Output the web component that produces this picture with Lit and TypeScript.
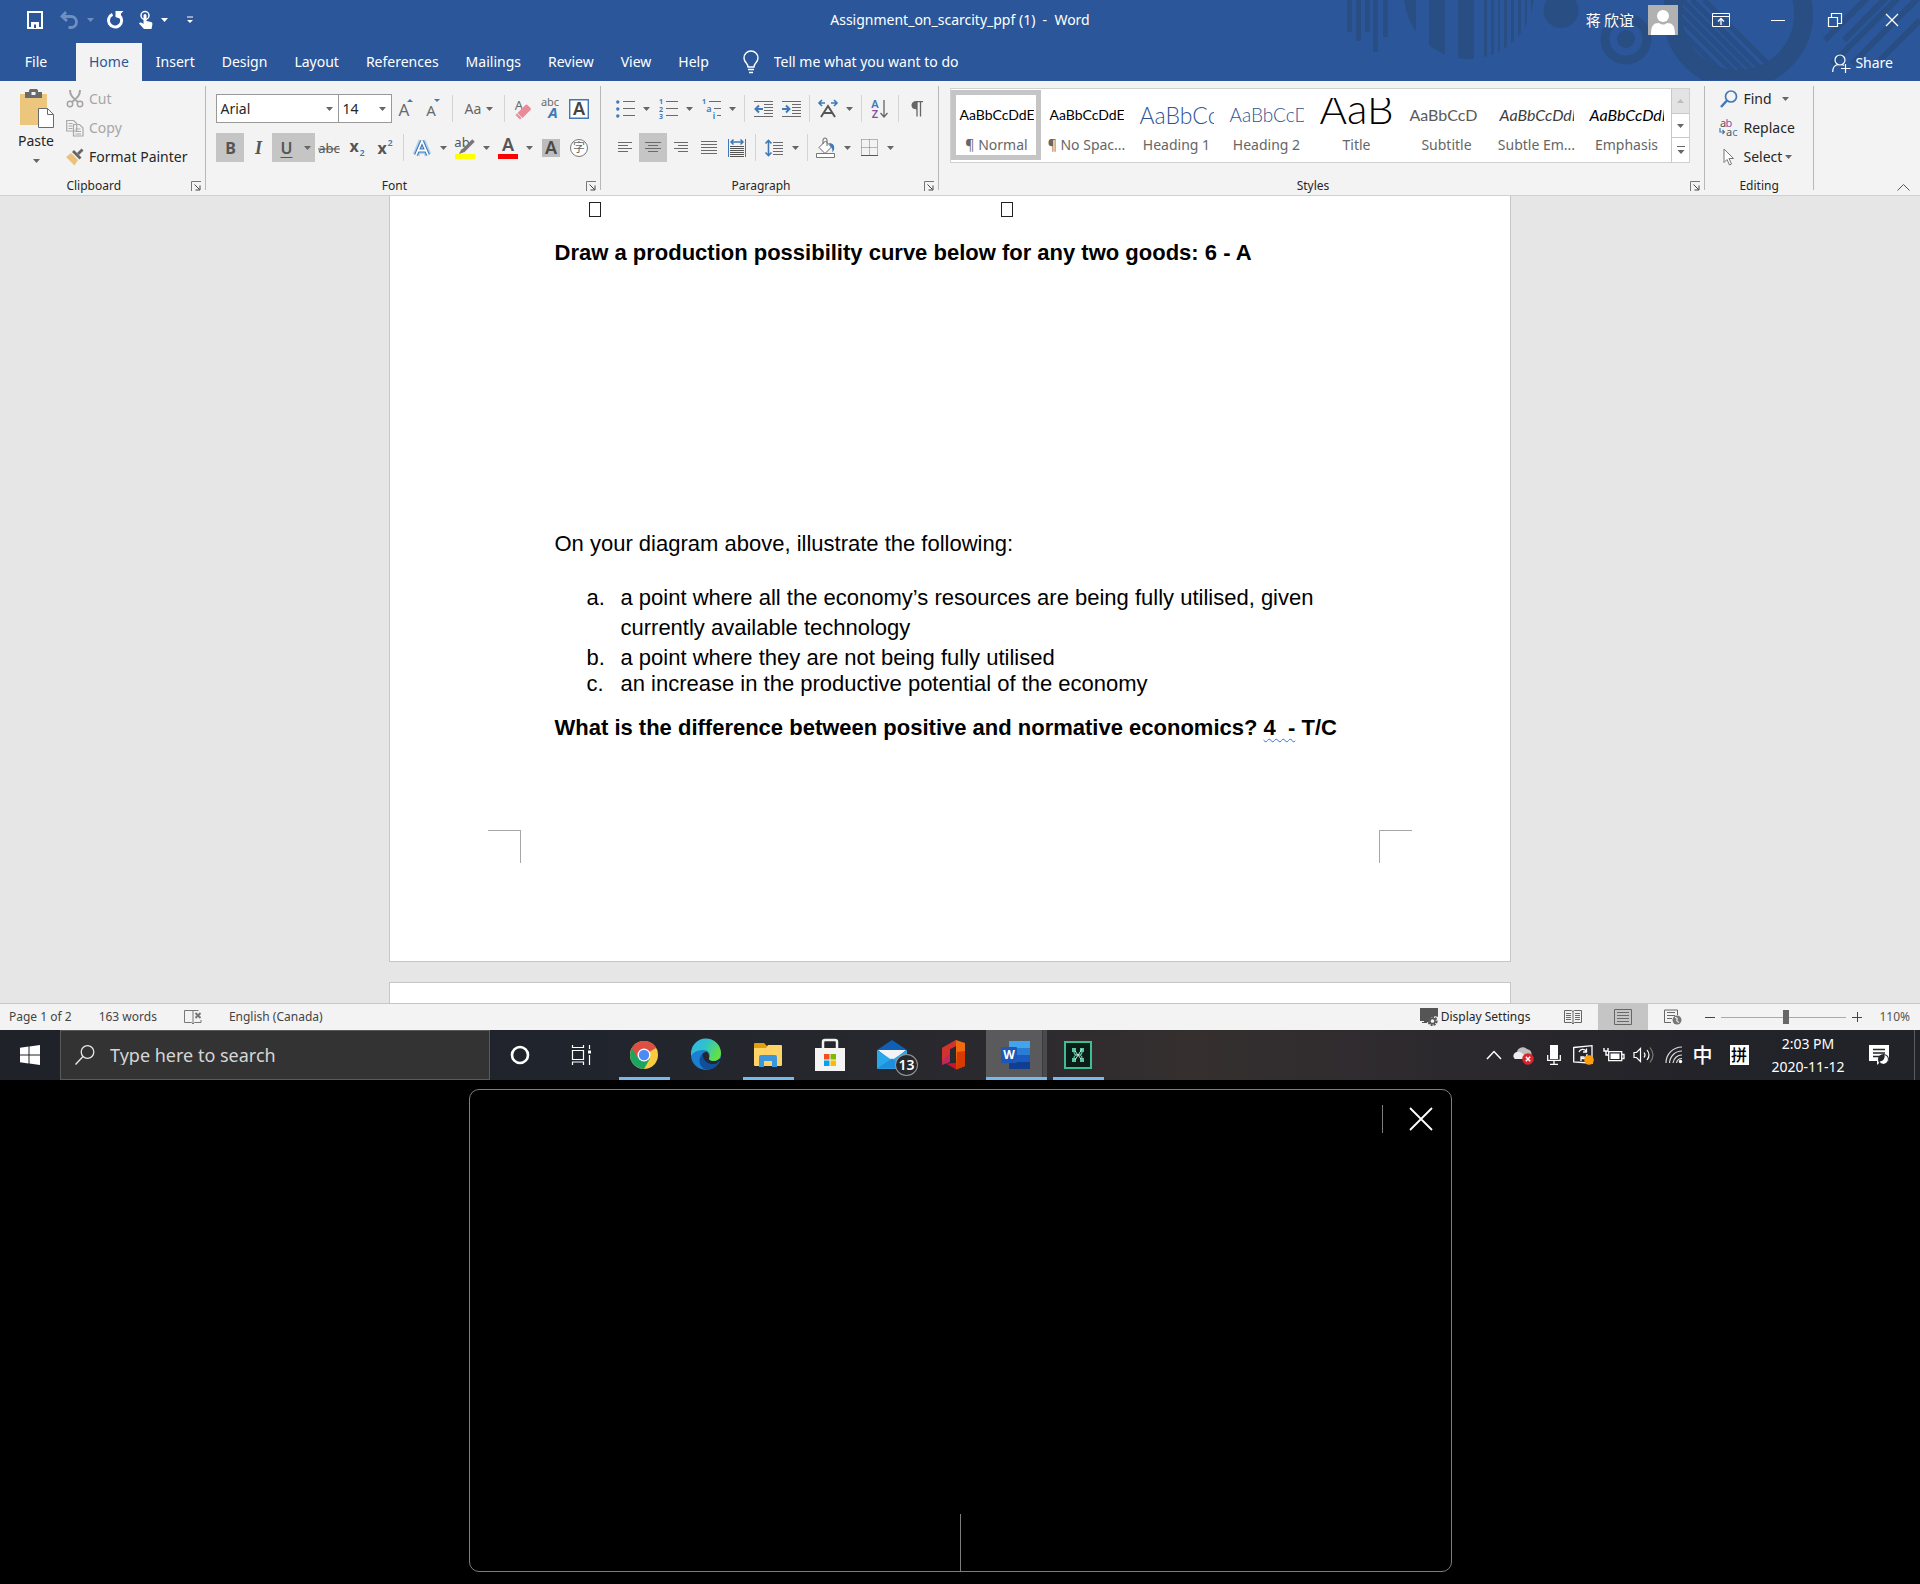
import { LitElement, html, svg, css, TemplateResult } from "lit";
import { customElement, state } from "lit/decorators.js";
import { classMap } from "lit/directives/class-map.js";

const ic = (w: number, h: number, body: unknown) =>
  html`<svg class="ic" width=${w} height=${h} viewBox="0 0 ${w} ${h}" fill="none" aria-hidden="true">${body}</svg>`;

const G = "#6a6a6a";
const B = "#3f79b8";

const caret = (fill = "#666") => ic(7, 4, svg`<path d="M0 0h7L3.5 4z" fill=${fill} />`);

/** Horizontal rules of the given [x1, x2, y] triples. */
const rules = (rows: number[][], stroke = G) =>
  rows.map(([a, b, y]) => svg`<path d="M${a} ${y + 0.5}H${b}" stroke=${stroke} />`);

const txt = (
  x: number, y: number, size: number, fill: string, s: string, weight = "400", style = "normal", family = "Noto Sans",
) => svg`<text x=${x} y=${y} font-size=${size} fill=${fill} font-weight=${weight} font-style=${style}
  font-family="'${family}', 'Noto Sans CJK SC', sans-serif" text-anchor="middle">${s}</text>`;

const I: Record<string, TemplateResult> = {
  save: ic(18, 18, svg`<path d="M2 1h14v16H2z" stroke="#fff" stroke-width="2"/><path d="M5 11h8v6H5z" fill="#fff"/><path d="M8 13.500h2V17H8z" fill="#2b579a"/>`),
  undo: ic(20, 18, svg`<path d="M6 1 2 5.500 7 10M2.500 5.500H11a5.500 5.500 0 0 1 0 11H8.500" stroke="#6f8fc3" stroke-width="2.800"/>`),
  redo: ic(18, 18, svg`<path d="M6.500 3.300A6.600 6.600 0 1 0 13.500 4.500" stroke="#fff" stroke-width="3"/><path d="M9.500 0h8l-2.500 2.500V8L9.500 6z" fill="#fff"/>`),
  touch: ic(16, 20, svg`<circle cx="7" cy="5.500" r="4" stroke="#fff" stroke-width="1.500"/><path d="M5.500 5.500a1.500 1.500 0 0 1 3 0V11l4.500 1c1.500.4 1.500 1.500 1.300 3L13.500 19H6L1 13.500c1-1.500 2.500-1 4.500.5z" fill="#fff"/>`),
  customize: ic(8, 8, svg`<path d="M1 1h6" stroke="#fff"/><path d="M1 4h6L4 7z" fill="#fff"/>`),
  bulb: ic(18, 24, svg`<path d="M6 17c0-4-4-4.500-4-9a7 7 0 0 1 14 0c0 4.500-4 5-4 9zM6 19.500h6M7 22.500h4" stroke="#fff" stroke-width="1.400"/>`),
  avatar: ic(30, 30, svg`<path d="M0 0h30v30H0z" fill="#b1b1b1"/><circle cx="15" cy="11" r="6" fill="#fff"/><path d="M3 30c0-9 2-12 8-12 2.500 2 5.500 2 8 0 6 0 8 3 8 12z" fill="#fff"/>`),
  ribbonOpts: ic(18, 14, svg`<path d="M.5.500h17v13H.5zM.5 3.500h17" stroke="#fff"/><path d="M9 12V6M6 8.500l3-3 3 3" stroke="#fff" stroke-width="1.300"/>`),
  minimize: ic(14, 14, svg`<path d="M0 7.500h14" stroke="#fff"/>`),
  restore: ic(14, 14, svg`<path d="M.5 4.500h9v9h-9zM3.500 4V.5h10v10H10" stroke="#fff" stroke-width="1.200"/>`),
  close: ic(14, 14, svg`<path d="m1 1 12 12M13 1 1 13" stroke="#fff" stroke-width="1.300"/>`),
  share: ic(19, 19, svg`<circle cx="8" cy="6" r="5" stroke="#fff" stroke-width="1.200"/><path d="M.7 18c0-4 2-7 5.500-7.500M10 10.500l2 1M13.500 10v9M9 14.500h9.500" stroke="#fff" stroke-width="1.200"/>`),
  paste: ic(35, 40, svg`<path d="M1 5h27v31H1z" fill="#ecc67d"/><path d="M6 3h4V1.500C10 .7 11 0 12 0h5c1 0 2 .7 2 1.500V3h4v6H6z" fill="#6a6a6a"/><path d="M12.500 3h4v3h-4z" fill="#f3f3f3"/><path d="M19.500 19.500h9l6 6v13h-15z" fill="#fff" stroke="#6a6a6a"/><path d="M28.500 19.500v6h6" stroke="#6a6a6a"/>`),
  cut: ic(18, 18, svg`<path d="M4 0c0 5 2 7 8 12M14 0c0 5-2 7-8 12" stroke="#a6a3a6" stroke-width="2"/><circle cx="4" cy="14" r="2.700" stroke="#a6a3a6" stroke-width="1.500"/><circle cx="14" cy="14" r="2.700" stroke="#a6a3a6" stroke-width="1.500"/>`),
  copy: ic(18, 18, svg`<path d="M.7 1.500h7l3 3V12h-10zM7.500 5.500h6l3.500 3.500v8H7.500z" fill="#f3f3f3" stroke="#aaa7aa" stroke-width="1.200"/><path d="M2.500 4.500h4M2.500 7h4M2.500 9.500h4M9.500 10h5M9.500 12.500h5.500M9.500 15h5.500" stroke="#aaa7aa"/>`),
  painter: ic(18, 18, svg`<path d="m0 9 5-4 7 7-3.500 5.500z" fill="#ecc27a"/><path d="m6 4 2-2 7.500 7.500-2 2z" fill="#666"/><path d="m11 5 4.500-4.500 2 2L13 7z" fill="#666"/>`),
  launcher: ic(10, 10, svg`<path d="M.5 10V.5H10" stroke="#777"/><path d="m3.500 3.500 5 5M9 4.500V9H4.500" stroke="#444"/>`),
  grow: ic(20, 22, svg`${txt(8, 18, 17, G, "A")}<path d="m11 4 3-3 3 3z" fill=${B}/>`),
  shrink: ic(20, 22, svg`${txt(7, 18, 15, G, "A")}<path d="m10 1 3 3 3-3z" fill=${B}/>`),
  clear: ic(20, 22, svg`${txt(6, 12, 13, G, "A")}<path d="m4.500 15 8-8q1-1 2 0l3 3q1 1 0 2l-8 8z" fill="#e88a98"/><path d="m2.500 17 1.500-1.500 4.500 4.500L7 21.500z" fill="#e88a98"/>`),
  phonetic: ic(20, 22, svg`${txt(9, 8, 11, G, "abc")}${txt(12, 20, 15, B, "A", "700", "italic")}`),
  charBorder: ic(20, 20, svg`<path d="M.7.700h18.600v18.600H.7z" stroke=${B} stroke-width="1.400" fill="#fff"/>${txt(10, 16, 18, "#444", "A", "600")}`),
  strike: ic(22, 18, svg`${txt(11, 14, 13, "#555", "abc")}<path d="M0 10h22" stroke="#555"/>`),
  sub: ic(18, 20, svg`${txt(6, 14, 16, "#555", "x", "700")}${txt(14, 18, 9, B, "2", "600")}`),
  sup: ic(18, 20, svg`${txt(6, 16, 16, "#555", "x", "700")}${txt(14, 8, 9, B, "2", "600")}`),
  effects: ic(20, 20, svg`<path d="M10 3 4 17M10 3l6 14M6.500 12.500h7" stroke="#b5d3f0" stroke-width="7"/><path d="M10 3 4 17M10 3l6 14M6.500 12.500h7" stroke=${B} stroke-width="4"/><path d="M10 3 4 17M10 3l6 14M6.500 12.500h7" stroke="#fff" stroke-width="1.800"/>`),
  highlight: ic(22, 22, svg`${txt(8, 10, 13, "#555", "ab")}<path d="M19.500 3.500 9 14" stroke="#777" stroke-width="3.500"/><path d="m5 17 2.500-5 3 3z" fill="#777"/><path d="M1 17h20v5H1z" fill="#ff0"/>`),
  fontColor: ic(20, 22, svg`${txt(10, 14, 18, "#555", "A", "600")}<path d="M0 17h20v5H0z" fill="#f00"/>`),
  shade: ic(18, 18, svg`<path d="M0 0h18v18H0z" fill="#bdbdbd"/>${txt(9, 15, 18, "#4a4a4a", "A", "600")}`),
  enclose: ic(20, 20, svg`<circle cx="10" cy="10" r="8.500" stroke="#777" fill="#fff"/>${txt(10, 14, 12, "#666", "字", "400", "normal", "Noto Sans CJK SC")}`),
  bullets: ic(19, 20, svg`${[3, 10, 17].map((y) => svg`<circle cx="1.800" cy=${y} r="1.700" fill=${B}/><path d="M7 ${y - 0.5}h12" stroke=${G}/>`)}`),
  numbering: ic(19, 20, svg`${txt(2, 5, 7, B, "1", "700")}${txt(2, 13, 7, B, "2", "700")}${txt(2, 20, 7, B, "3", "700")}${rules([[7, 19, 2], [7, 19, 9], [7, 19, 16]])}`),
  multi: ic(19, 20, svg`${txt(2, 5, 7, B, "1", "700")}${txt(7, 13, 9, B, "a", "600")}${txt(12, 20, 8, B, "i", "700")}${rules([[7, 19, 2], [12, 19, 9], [15, 19, 16]])}`),
  outdent: ic(19, 18, svg`${rules([[0, 19, 1], [10, 19, 4], [10, 19, 7], [10, 19, 10], [10, 19, 13], [0, 19, 16]])}<path d="M1 9h8M5 5.500 1.500 9 5 12.500" stroke=${B} stroke-width="2"/>`),
  indent: ic(19, 18, svg`${rules([[0, 19, 1], [10, 19, 4], [10, 19, 7], [10, 19, 10], [10, 19, 13], [0, 19, 16]])}<path d="M0 9h8M4 5.500 7.500 9 4 12.500" stroke=${B} stroke-width="2"/>`),
  asian: ic(20, 18, svg`<path d="M1 3h6M13 3h6M4 0 1 3l3 3M16 0l3 3-3 3" stroke=${B} stroke-width="1.600"/><path d="m3 17 7-11 7 11M5.500 13h9" stroke="#555" stroke-width="2"/>`),
  sort: ic(18, 20, svg`${txt(4, 9, 11, B, "A", "600")}${txt(4, 19, 11, "#8a4fa3", "Z", "600")}<path d="M13 1v16M9.500 14l3.500 4 3.500-4" stroke="#666" stroke-width="1.300"/>`),
  pilcrow: ic(12, 16, svg`<path d="M6 15.500V.7h6M9.500.700v14.800" stroke="#666" stroke-width="1.300"/><path d="M6 0C2 0 .5 2 .5 4.300S2 8.500 6 8.500z" fill="#666"/>`),
  left: ic(14, 12, svg`${rules([[0, 14, 0], [0, 10, 3], [0, 14, 6], [0, 10, 9]])}`),
  center: ic(16, 12, svg`${rules([[0, 16, 0], [3, 13, 3], [0, 16, 6], [3, 13, 9]])}`),
  right: ic(14, 12, svg`${rules([[0, 14, 0], [4, 14, 3], [0, 14, 6], [4, 14, 9]])}`),
  justify: ic(16, 13, svg`${rules([[0, 16, 0], [0, 16, 3], [0, 16, 6], [0, 16, 9], [0, 16, 12]])}`),
  distribute: ic(18, 18, svg`<path d="M.5 0v18M17.500 0v18" stroke=${B}/><path d="M3 3h12M5.500.500 3 3l2.500 2.500M12.500.500 15 3l-2.500 2.500" stroke=${B} stroke-width="1.500"/>${rules([[2, 16, 7], [2, 16, 9], [2, 16, 11], [2, 16, 13], [2, 16, 15], [2, 16, 17]], "#555")}`),
  spacing: ic(18, 18, svg`<path d="M3.500 1v16M.5 4.500l3-3 3 3M.5 13.500l3 3 3-3" stroke=${B} stroke-width="1.600"/>${rules([[8, 18, 3], [8, 18, 6], [8, 18, 9], [8, 18, 12], [8, 18, 15]])}`),
  bucket: ic(20, 20, svg`<path d="M3 9.500 9.500 3l6 6L9 15.500z" fill="#fff" stroke="#666"/><path d="M7 6V2a2 2 0 0 1 4 0v6" stroke="#666"/><path d="M13 5c6 0 6.500 6 3.500 9.500 0-3-.5-5-2-6z" fill=${B}/><path d="M.5 15.500h18v4H.5z" fill="#fff" stroke="#777"/>`),
  borders: ic(17, 17, svg`<path d="M.5.500h16M.5.500v15M16.500.500v15M8.500.500v15M.5 8.500h16" stroke="#777" stroke-dasharray="1 1"/><path d="M0 16.500h17" stroke="#555"/>`),
  find: ic(18, 18, svg`<circle cx="11" cy="6.500" r="5.500" stroke=${B} stroke-width="1.700"/><path d="m7 10.500-6 6.500" stroke=${B} stroke-width="2.500"/>`),
  replace: ic(20, 18, svg`${txt(4, 8, 11, "#555", "a")}${txt(10, 8, 11, "#8a4fa3", "b")}${txt(10, 17, 11, "#555", "a")}${txt(16, 17, 11, B, "c")}<path d="M1 9v4h4M3.500 11l2 2-2 2" stroke=${B} stroke-width="1.200"/>`),
  select: ic(12, 18, svg`<path d="M1 1v13.500l3-3 2.500 5.500 2-1L6 10.500h4.500z" fill="#fff" stroke="#777"/>`),
  up: ic(13, 8, svg`<path d="m.5 7.500 6-6 6 6" stroke="#555"/>`),
  more: ic(8, 8, svg`<path d="M0 .5h8" stroke="#666"/><path d="M.5 4h7L4 8z" fill="#666"/>`),
  upCaret: ic(7, 4, svg`<path d="M0 4h7L3.500 0z" fill="#bdbdbd"/>`),
  proof: ic(18, 16, svg`<path d="M9 1.500H.5v12h7L9 15zM9 1.500h5.500M9 15l1.500-1.500H17V11" stroke="#777"/><path d="m11.500 4 5 5M16.500 4l-5 5" stroke="#777" stroke-width="2"/>`),
  display: ic(20, 20, svg`<path d="M1 1h18v9a6 6 0 0 0-9 5H8v1H3v-1h2v-1H1z" fill="#555"/><circle cx="13.500" cy="14" r="4" stroke="#555" stroke-width="2.200" stroke-dasharray="2 1"/><circle cx="13.500" cy="14" r="2.600" stroke="#555" stroke-width="1.500"/>`),
  read: ic(18, 16, svg`<path d="M9 2.500 7.500 1.500H.5v12h7L9 15l1.500-1.500h7v-12h-7zV15" stroke="#666"/>${rules([[2, 7, 4], [2, 7, 6], [2, 7, 8], [2, 7, 10], [11, 16, 4], [11, 16, 6], [11, 16, 8], [11, 16, 10]])}`),
  print: ic(18, 16, svg`<path d="M.5.500h17v15H.5z" stroke="#666"/>${rules([[3, 15, 3], [3, 15, 6], [3, 15, 9], [3, 15, 12]])}`),
  web: ic(18, 16, svg`<path d="M7 13.500H.5V1h13v5" stroke="#666"/>${rules([[3, 11, 3], [3, 11, 6], [3, 8, 9]])}<circle cx="13" cy="11" r="4.500" fill="#777"/><path d="M11 8.500q3 .5 2 2t2 3" stroke="#f3f3f3" stroke-width="1.200"/>`),
  minus: ic(10, 10, svg`<path d="M0 5.500h10" stroke="#444"/>`),
  plus: ic(10, 10, svg`<path d="M0 5.500h10M5.500 0v10" stroke="#444"/>`),
  windows: ic(20, 20, svg`<path d="M0 2.800 8.500 1.600v7.900H0zM9.500 1.400 20 0v9.500H9.500zM0 10.500h8.500v7.900L0 17.200zM9.500 10.500H20V20L9.500 18.600z" fill="#fff"/>`),
  search: ic(20, 20, svg`<circle cx="12.500" cy="7" r="6.300" stroke="#e8e8e8" stroke-width="1.300"/><path d="M8 11.500.5 19.500" stroke="#e8e8e8" stroke-width="1.300"/>`),
  cortana: ic(20, 20, svg`<circle cx="10" cy="10" r="8" stroke="#fff" stroke-width="2.600"/>`),
  taskview: ic(22, 20, svg`<path d="M1.500 5.500h11v9h-11zM1.500 0v2.500h11V0M1.500 20v-3h11v3M18.500 0v4M18.500 10v10" stroke="#fff" stroke-width="1.200"/><path d="M17 5.500h3v3h-3z" fill="#fff"/>`),
  chrome: ic(30, 30, svg`<circle cx="15" cy="15" r="14" fill="#fcca3f"/><path d="M15 15 2.900 8A14 14 0 0 1 27.100 8z" fill="#dd4f43"/><path d="M2.900 8A14 14 0 0 0 15 29l6-10.500L15 15z" fill="#1da462"/><path d="M15 8h12.100a14 14 0 0 0-24.200 0L9 18.500z" fill="#dd4f43"/><circle cx="15" cy="15" r="6.500" fill="#fff"/><circle cx="15" cy="15" r="5.200" fill="#4c8bf5"/>`),
  edge: ic(30, 30, svg`<defs><linearGradient id="eg" x1="0" y1="0" x2="1" y2=".5"><stop offset="0" stop-color="#36b1f0"/><stop offset=".5" stop-color="#2fc3c9"/><stop offset="1" stop-color="#63e046"/></linearGradient></defs><circle cx="15" cy="15" r="15" fill="#1a7fd0"/><path d="M0 14A15 15 0 0 1 30 13c0 5-3 8-7.500 8-3 0-5-1-4.500-3 1.500-2 1-8-5-8-6 0-11 2-13 6z" fill="url(#eg)"/><path d="M12 13c-4 6-1 14 6 14 4 0 7-1.500 9-4.500l2.500-2 .5-2.500-5 3-4.500 0c-2-.5-3-1.500-2.500-3 .5-1.500 0-5-2.500-6.500z" fill="#26262c"/><path d="M11.500 14C5 20 10 30 17 29.800c5-.5 8.500-3 10.500-7C21 26 12 23 11.500 14z" fill="#104f9c"/>`),
  folder: ic(30, 28, svg`<path d="M1 3q0-1 1-1h9l3 3h12v5H1z" fill="#e0a012"/><path d="M1 7h12l2-3h13q1 0 1 1v19q0 1-1 1H2q-1 0-1-1z" fill="#ffd366"/><path d="M6 26V16q0-2 2-2h14q2 0 2 2v10h-5v-6h-8v6z" fill="#3a96dd"/>`),
  store: ic(30, 32, svg`<path d="M8 9V3q0-2 2-2h10q2 0 2 2v6" stroke="#f2f2f2" stroke-width="2.500"/><path d="M0 9h30v23H0z" fill="#f4f4f4"/><path d="M9 15h5.500v5.500H9z" fill="#f25022"/><path d="M15.500 15H21v5.500h-5.500z" fill="#7fba00"/><path d="M9 21.500h5.500V27H9z" fill="#00a4ef"/><path d="M15.500 21.500H21V27h-5.500z" fill="#ffb900"/>`),
  mail: ic(30, 30, svg`<path d="M0 10 15 0l15 10v3H0z" fill="#0f5fb5"/><path d="M1 10h28l-14 12z" fill="#f4f4f4"/><path d="M0 10v18q0 1 1 1h28q1 0 1-1V10L15 20z" fill="#28a8ea"/><path d="m0 28.500 15-10 15 10z" fill="#1f8fdd"/>`),
  office: ic(24, 30, svg`<path d="M0 8 14 0v6l-6 3v13l-8 3z" fill="#c0275f"/><path d="M0 8 14 0v6l-6 3v4l-8 8z" fill="#d0342c"/><path d="m14 0 9 3v23l-9 3.500z" fill="#f06a12"/><path d="m15 12 8-1v15l-9 3.500z" fill="#d83b01"/><path d="m4 23.500 10-.5v6.500z" fill="#c8142c"/>`),
  word: ic(30, 30, svg`<path d="M8 1h21v7H8z" fill="#41a5ee"/><path d="M8 8h21v7H8z" fill="#2b7cd3"/><path d="M8 15h21v7H8z" fill="#185abd"/><path d="M8 22h21v7H8z" fill="#103f91"/><rect x="0" y="7" width="16" height="16" rx="1" fill="#1d57b8"/>${txt(8, 19, 12, "#fff", "W", "700")}`),
  clip: ic(28, 28, svg`<path d="M1 1h26v26H1z" fill="#0b1d18" stroke="#3dbf92" stroke-width="2"/><path d="M8 7h4v4H8zM16 7h4v4h-4zM8 17h4v4H8zM16 17h4v4h-4z" fill="#57c79e"/><path d="M10 11q0 3 4 3t4-3M10 17q0-3 4-3t4 3" stroke="#5fc9a3" stroke-width="1.200"/><path d="m11 19 7-11M11 10l6 8" stroke="#bfe8d7"/>`),
  chevron: ic(16, 10, svg`<path d="m1 9 7-7.500L15 9" stroke="#fff" stroke-width="1.500"/>`),
  cloud: ic(22, 20, svg`<path d="M1 13a4 4 0 0 1 3-6 6 6 0 0 1 10-3q5 1 4.500 6L6 14H2z" fill="#bfbfbf"/><path d="M2 14a4 4 0 0 1 2-7q4-1 7 3l-1 4z" fill="#eee"/><circle cx="15" cy="14" r="5.800" fill="#d9252e"/><path d="m12.800 11.800 4.400 4.400M17.200 11.800l-4.400 4.400" stroke="#fff" stroke-width="1.500"/>`),
  mic: ic(14, 20, svg`<path d="M3 0h8v14H3z" fill="#fff"/><path d="M.7 10v5.300h12.600V10M7 15v4M3 19.300h8" stroke="#fff" stroke-width="1.300"/>`),
  secure: ic(22, 20, svg`<path d="M.7 2.500 19 .7v17.500L.7 17z" stroke="#fff" stroke-width="1.300"/><path d="M6 7a4 4 0 0 1 7-1M13.500 3.500V7H10M14 9a4 4 0 0 1-6 4M8 16v-4h3.500" stroke="#fff" stroke-width="1.300"/><circle cx="16" cy="15" r="4.800" fill="#ff9d0a"/>`),
  battery: ic(22, 14, svg`<path d="M5.700 3.700h13v9h-13zM19 6.500h2v4h-2" stroke="#fff" stroke-width="1.300"/><path d="M7.500 5.500h9v5.500h-9z" fill="#fff"/><path d="M1 0v3h4V0M3 3v4h3" stroke="#fff" stroke-width="1.400"/>`),
  volume: ic(22, 18, svg`<path d="M1 6.500h2.500l4-4v13l-4-4H1z" stroke="#fff" stroke-width="1.200"/><path d="M11 6.500q2 2.500 0 5M14 4q4 5 0 10" stroke="#fff" stroke-width="1.200"/><path d="M17 1.500q6 7.500 0 15" stroke="#777" stroke-width="1.200"/>`),
  wifi: ic(18, 18, svg`<path d="M1 17A16 16 0 0 1 17 1M4.500 17A12.500 12.500 0 0 1 17 5M8 17a9 9 0 0 1 9-8M11.500 17a5.500 5.500 0 0 1 5.500-4.500" stroke="#ddd" stroke-width="1.200"/><circle cx="15.500" cy="15.500" r="1.700" fill="#fff"/>`),
  notify: ic(20, 20, svg`<path d="M0 0h20v16h-8l-4 4v-4H0z" fill="#fff"/><path d="M4 4.500h12M4 8h12M4 11.500h7" stroke="#25262c" stroke-width="1.400"/><circle cx="14.500" cy="14.500" r="5.500" fill="#25262c"/><path d="M15.500 10a4.500 4.500 0 1 1-5 6.500 5 5 0 0 0 5-6.500z" fill="#fff"/>`),
  bigClose: ic(24, 24, svg`<path d="m1 1 22 22M23 1 1 23" stroke="#fff" stroke-width="1.800"/>`),
};

const DARK = "#294e84";

/** Decorative pattern behind the window buttons. */
const headerArt = svg`
  <defs>
    <clipPath id="disc"><circle cx="129" cy="-6" r="65"/></clipPath>
    <clipPath id="hole"><circle cx="398" cy="14" r="57"/></clipPath>
  </defs>
  <g fill=${DARK}>
    <path d="M7 0h5v32H7zM16 0h5v41h-5zM25 0h5v32h-5zM33 0h5v52h-5zM43 0h5v37h-5z"/>
    <path clip-path="url(#disc)" d="M60 0h16v80H60zM89 0h16v80H89zM118 0h16v80h-16zM144 0h3v80h-3zM151 0h3v80h-3zM158 0h2v80h-2zM164 0h3v80h-3zM171 0h3v80h-3zM178 0h3v80h-3zM185 0h2v80h-2zM191 0h3v80h-3z"/>
    <circle cx="221" cy="10.500" r="17.500"/>
    <circle cx="286" cy="39" r="9"/>
  </g>
  <circle cx="286" cy="39" r="21" stroke=${DARK} stroke-width="9"/>
  <circle cx="398" cy="14" r="65.500" stroke=${DARK} stroke-width="19"/>
  <path clip-path="url(#hole)" stroke=${DARK} stroke-width="5" d="m320 10 80 80M322 0l80 80M332 0l80 80M342 0l80 80M352 0l80 80M364 0l80 80"/>
  <path stroke=${DARK} stroke-width="6" d="m485 40 44-44M504 40l44-44M492 64l70-70M512 64l68-68M540 60l40-40"/>`;

interface Style { name: string; sample: string; kind: string; }

const STYLES: Style[] = [
  { name: "¶ Normal", sample: "AaBbCcDdEe", kind: "s-normal" },
  { name: "¶ No Spac...", sample: "AaBbCcDdEe", kind: "s-normal" },
  { name: "Heading 1", sample: "AaBbCcDd", kind: "s-h1" },
  { name: "Heading 2", sample: "AaBbCcDd", kind: "s-h2" },
  { name: "Title", sample: "AaB", kind: "s-title" },
  { name: "Subtitle", sample: "AaBbCcD", kind: "s-sub" },
  { name: "Subtle Em...", sample: "AaBbCcDdEe", kind: "s-subtle" },
  { name: "Emphasis", sample: "AaBbCcDdEe", kind: "s-emph" },
];

const TABS = ["Home", "Insert", "Design", "Layout", "References", "Mailings", "Review", "View", "Help"];

const APPS = [
  { id: "cortana", label: "Cortana" },
  { id: "taskview", label: "Task View" },
  { id: "chrome", label: "Google Chrome", open: true },
  { id: "edge", label: "Microsoft Edge" },
  { id: "folder", label: "File Explorer", open: true },
  { id: "store", label: "Microsoft Store" },
  { id: "mail", label: "Mail", badge: "13" },
  { id: "office", label: "Office" },
  { id: "word", label: "Word", open: true, active: true },
  { id: "clip", label: "Clip", open: true },
];

const TRAY = ["chevron", "cloud", "mic", "secure", "battery", "volume", "wifi"];

@customElement("app-root")
export class AppRoot extends LitElement {
  @state() private tab = "Home";
  @state() private style_ = 0;

  static styles = css`
    :host { display: flex; flex-direction: column; min-height: 100vh; background: #000; color: #262626;
      font: 14px/20px "Noto Sans", "Noto Sans CJK SC", sans-serif; }
    * { box-sizing: border-box; }
    button, input, select { font: inherit; color: inherit; border: 0; background: none; padding: 0; margin: 0; border-radius: 0; outline: 0; }
    button { display: flex; align-items: center; justify-content: center; white-space: nowrap; }
    .ic { display: block; flex: none; overflow: visible; }

    .header { position: relative; background: #2b579a; color: #fff; }
    .art { position: absolute; top: 0; right: 0; }
    .titlebar { position: relative; display: grid; grid-template-columns: 1fr auto 1fr; align-items: center; height: 40px; }
    .quick { display: flex; align-items: center; padding-left: 26px; }
    .quick button { height: 32px; }
    .q-save { margin-right: 16px; }
    .q-caret { width: 20px; }
    .q-redo { margin-left: 6px; width: 18px; }
    .q-touch { margin-left: 14px; }
    .q-custom { margin-left: 12px; }
    .title { white-space: pre; }
    .account { display: flex; align-items: center; justify-content: flex-end; }
    .user { gap: 14px; margin-right: 14px; font: 15px/20px "Noto Sans CJK SC", sans-serif; }
    .win { width: 57px; height: 38px; }
    .tabs { position: relative; display: flex; padding-top: 3px; height: 41px; gap: 1px; }
    .tabs button { padding: 0 13px; }
    .tabs .file { width: 72px; margin-right: 3px; }
    .tabs .on { background: #f3f3f3; color: #2b579a; }
    .tell { display: flex; align-items: center; gap: 14px; margin-left: 19px; flex: 1; }
    .tell input { width: 240px; }
    .tell input::placeholder { color: #fff; opacity: 1; }
    .tabs .share { gap: 4px; padding: 2px 27px 0 0; }

    .ribbon { display: flex; padding-top: 3px; background: #f3f3f3; border-bottom: 1px solid #d0d0d0; }
    .vline { width: 1px; margin: 2px 0 5px; background: #b8b8b8; }
    .group { display: flex; flex-direction: column; }
    .body { height: 92px; }
    .foot { display: flex; height: 19px; font-size: 12px; line-height: 19px; text-align: center; }
    .foot button { width: 18px; }
    .foot span { flex: 1; }
    .clip { display: flex; padding: 0 18px 0 11px; }
    .paste { flex-direction: column; justify-content: flex-start; width: 50px; padding-top: 5px; }
    .paste span { line-height: 24px; margin-bottom: 6px; }
    .line { height: 29px; justify-content: flex-start; }
    .line .box { display: flex; justify-content: center; width: 28px; }
    .line .caret { padding-left: 3px; }
    .find .caret { padding-left: 10px; }
    .off { color: #a6a6a6; }
    .rows { display: flex; flex-direction: column; gap: 10px; padding: 10px 7px 0 10px; }
    .row { display: flex; height: 29px; }
    .tool { width: 28px; }
    .drop { width: 15px; }
    .wide { width: 43px; gap: 5px; color: #666; }
    .pressed { background: #c5c5c5; }
    .sep { width: 1px; margin: 1px 4px; background: #d4d4d4; }
    .bold { font-weight: 700; color: #555; font-size: 16px; }
    .ital { font: italic 700 18px/20px "Liberation Serif", serif; color: #555; }
    .under { font-weight: 600; text-decoration: underline; color: #555; font-size: 16px; text-underline-offset: 3px; }
    .combo { display: flex; align-items: center; background: #fff; border: 1px solid #999; }
    .combo + .combo { border-left: 0; }
    .combo select { appearance: none; padding-left: 3px; flex: 1; min-width: 0; height: 27px; }
    .combo .ic { margin-right: 5px; }
    .fname { width: 123px; }
    .fsize { width: 53px; }
    .gallery { display: flex; margin: 4px 14px 0 11px; background: #fff; border: 1px solid #d0d0d0; }
    .styles { display: flex; padding: 1px 0 2px; }
    .card { display: block; width: 90px; border: 5px solid transparent; padding: 3px 0 0; text-align: center; color: #666; }
    .card.sel { border-color: #c5c5c5; }
    .sample { display: block; height: 30px; margin: 0 2px 7px 3px; overflow: hidden; text-align: left; white-space: nowrap; line-height: 34px; font-family: Lato, Carlito, sans-serif; color: #000; }
    .s-normal { font-size: 14px; }
    .s-h1 { font-size: 23px; font-weight: 300; color: #2f5496; }
    .s-h2 { font-size: 19px; font-weight: 300; color: #2f5496; }
    .s-title { font-size: 42px; font-weight: 300; line-height: 20px; }
    .s-sub { font-size: 16px; color: #5a5a5a; }
    .s-subtle { font-size: 16px; font-style: italic; color: #404040; }
    .s-emph { font-size: 16px; font-style: italic; }
    .scroll { display: flex; flex-direction: column; border-left: 1px solid #c8c8c8; }
    .scroll button { flex: 1; width: 17px; }
    .scroll button + button { border-top: 1px solid #c8c8c8; }
    .scroll .dim { background: #e3e3e3; }
    .edit { padding: 0 18px 0 10px; }
    .collapse { margin: auto 10px 4px auto; }

    .desk { background: #e6e6e6; padding-right: 21px; }
    .page { width: 100%; max-width: 1122px; margin: 0 auto; background: #fff; border: 1px solid #c6c6c6; border-top: 0; color: #000;
      font: 22px/26px "Liberation Sans", Arial, sans-serif; }
    .next { height: 21px; margin-top: 20px; border-top: 1px solid #c6c6c6; border-bottom: 0; }
    .content { padding: 6px 130px 0 165px; }
    .content h2 { font-size: 22px; margin: 0; white-space: pre-wrap; }
    .blanks { display: flex; gap: 400px; padding-left: 34px; height: 38px; }
    .blank { width: 12px; height: 15px; border: 1px solid #222; }
    .question { margin: 265px 0 26px; }
    .points { margin: 0 0 18px; padding: 0; list-style: none; }
    .points li { display: grid; grid-template-columns: 34px 1fr; padding-left: 32px; }
    .points .double { line-height: 30px; margin-bottom: 2px; }
    .wavy { text-decoration: underline wavy #3b6fd8 1px; text-underline-offset: 3px; text-decoration-skip-ink: none; }
    .marks { display: flex; justify-content: space-between; padding: 89px 98px 98px; }
    .mark { width: 33px; height: 33px; border-top: 1px solid #a6a6a6; }
    .mark:first-child { border-right: 1px solid #a6a6a6; }
    .mark:last-child { border-left: 1px solid #a6a6a6; }

    .status { display: flex; align-items: stretch; height: 27px; background: #f3f3f3; border-top: 1px solid #c6c6c6; font-size: 12px; color: #444; padding: 0 10px 0 9px; }
    .status button { margin-right: 27px; }
    .status .tail { display: flex; align-items: stretch; margin-left: auto; }
    .status .tail button { margin: 0; }
    .status .tail .disp { gap: 2px; margin-right: 18px; color: #262626; }
    .status .tail .view { width: 50px; }
    .status .tail .web { margin-right: 7px; }
    .zoom { appearance: none; width: 125px; margin: 0 6px; background: linear-gradient(#aaa, #aaa) center / 100% 1px no-repeat; }
    .zoom::-webkit-slider-thumb { appearance: none; width: 6px; height: 14px; background: #666; }
    .status .tail .pct { margin-left: 17px; color: #555; }

    .taskbar { display: flex; height: 50px; background: linear-gradient(90deg, #1f2229 0, #20242c 30%, #29292e 50%, #352f2f 62%, #2d2a2e 74%, #232329 88%, #212329 100%); color: #fff; }
    .start { width: 60px; }
    .search { display: flex; align-items: center; gap: 15px; width: 430px; margin-right: -1px; padding-left: 14px; background: #333; border: 1px solid #5a5a5a; font-size: 18px; }
    .search input { flex: 1; min-width: 0; }
    .search input::placeholder { color: #d6d6d6; opacity: 1; }
    .app { position: relative; width: 62px; }
    .app.active { background: linear-gradient(90deg, transparent 1px, #5a595c 1px 57px, #3c3b3e 57px 58px, #4a494c 58px); }
    .app.open::after { content: ""; position: absolute; left: 6px; right: 5px; bottom: 0; height: 3px; background: #76b9ed; }
    .app.active::after { left: 1px; right: 0; }
    .badge { position: absolute; left: 34px; top: 24px; width: 23px; height: 22px; border: 1px solid #999; border-radius: 50%; background: #26282d; font: 600 14px/20px "Noto Sans", sans-serif; }
    .tray { display: flex; margin-left: auto; padding-right: 5px; }
    .tray .cell { width: 30px; }
    .tray .ime { width: 27px; font: 500 20px/24px "Noto Sans CJK SC", sans-serif; }
    .tray .pin { width: 46px; }
    .pin span { width: 19px; height: 20px; background: #fff; color: #000; font: 500 16px/19px "Noto Sans CJK SC", sans-serif; }
    .clock { width: 92px; flex-direction: column; line-height: 23px; }
    .note { width: 50px; margin-right: 10px; }
    .peek { border-left: 1px solid #5a5b60; }

    .under-area { flex: 1; display: flex; padding: 9px 0 12px; }
    .panel { display: flex; flex-direction: column; justify-content: space-between; width: 100%; max-width: 983px; margin: 0 auto; border: 1px solid #7d7d7d; border-radius: 10px; }
    .phead { display: flex; justify-content: flex-end; align-items: center; gap: 26px; padding: 15px 18px 0 0; }
    .bar { width: 1px; height: 28px; background: #7d7d7d; }
    .pfoot { width: 1px; height: 57px; margin: 0 auto; background: #7d7d7d; }
  `;

  private tool(icon: unknown, label: string, pressed = false) {
    return html`<button class=${classMap({ tool: true, pressed })} aria-label=${label}>${icon}</button>`;
  }

  private split(icon: unknown, label: string, pressed = false) {
    return html`${this.tool(icon, label, pressed)}<button
        class=${classMap({ drop: true, pressed })} aria-label="${label} options">${caret()}</button>`;
  }

  private foot(label: string, launcher = true) {
    return html`<div class="foot"><span>${label}</span>
      ${launcher ? html`<button aria-label="${label} settings">${I.launcher}</button>` : ""}</div>`;
  }

  private renderHeader() {
    return html`<header class="header">
      <svg class="art" width="580" height="80" viewBox="0 0 580 80" fill="none" aria-hidden="true">${headerArt}</svg>
      <div class="titlebar">
        <div class="quick">
          <button class="q-save" aria-label="Save">${I.save}</button>
          <button aria-label="Undo">${I.undo}</button>
          <button class="q-caret" aria-label="Undo history">${caret("#6f8fc3")}</button>
          <button class="q-redo" aria-label="Redo">${I.redo}</button>
          <button class="q-touch" aria-label="Touch mode">${I.touch}</button>
          <button class="q-caret" aria-label="Touch mode options">${caret("#fff")}</button>
          <button class="q-custom" aria-label="Customize toolbar">${I.customize}</button>
        </div>
        <div class="title">Assignment_on_scarcity_ppf (1)  -  Word</div>
        <div class="account">
          <button class="user">蒋 欣谊 ${I.avatar}</button>
          <button class="win" aria-label="Ribbon display">${I.ribbonOpts}</button>
          <button class="win" aria-label="Minimize">${I.minimize}</button>
          <button class="win" aria-label="Restore">${I.restore}</button>
          <button class="win" aria-label="Close">${I.close}</button>
        </div>
      </div>
      <nav class="tabs">
        <button class="file">File</button>
        ${TABS.map((t) => html`<button class=${classMap({ on: this.tab === t })} @click=${() => (this.tab = t)}>${t}</button>`)}
        <label class="tell">${I.bulb}<input aria-label="Tell me" placeholder="Tell me what you want to do" /></label>
        <button class="share">${I.share} Share</button>
      </nav>
    </header>`;
  }

  private renderRibbon() {
    const sep = html`<span class="sep"></span>`;
    return html`<section class="ribbon">
      <div class="group">
        <div class="body clip">
          <button class="paste">${I.paste}<span>Paste</span>${caret()}</button>
          <div>
            <button class="line off"><span class="box">${I.cut}</span>Cut</button>
            <button class="line off"><span class="box">${I.copy}</span>Copy</button>
            <button class="line"><span class="box">${I.painter}</span>Format Painter</button>
          </div>
        </div>
        ${this.foot("Clipboard")}
      </div>
      <div class="vline"></div>
      <div class="group">
        <div class="body rows">
          <div class="row">
            <div class="combo fname"><select aria-label="Font"><option>Arial</option></select>${caret()}</div>
            <div class="combo fsize"><select aria-label="Font size"><option>14</option></select>${caret()}</div>
            ${this.tool(I.grow, "Increase font size")}${this.tool(I.shrink, "Decrease font size")}${sep}
            <button class="wide">Aa ${caret()}</button>${sep}
            ${this.tool(I.clear, "Clear formatting")}${this.tool(I.phonetic, "Phonetic guide")}${this.tool(I.charBorder, "Character border")}
          </div>
          <div class="row">
            ${this.tool(html`<span class="bold">B</span>`, "Bold", true)}
            ${this.tool(html`<span class="ital">I</span>`, "Italic")}
            ${this.split(html`<span class="under">U</span>`, "Underline", true)}
            ${this.tool(I.strike, "Strikethrough")}${this.tool(I.sub, "Subscript")}${this.tool(I.sup, "Superscript")}${sep}
            ${this.split(I.effects, "Text effects")}${this.split(I.highlight, "Highlight")}${this.split(I.fontColor, "Font color")}
            ${this.tool(I.shade, "Character shading")}${this.tool(I.enclose, "Enclose characters")}
          </div>
        </div>
        ${this.foot("Font")}
      </div>
      <div class="vline"></div>
      <div class="group">
        <div class="body rows">
          <div class="row">
            ${this.split(I.bullets, "Bullets")}${this.split(I.numbering, "Numbering")}${this.split(I.multi, "Multilevel list")}${sep}
            ${this.tool(I.outdent, "Decrease indent")}${this.tool(I.indent, "Increase indent")}${sep}
            ${this.split(I.asian, "Asian layout")}${sep}${this.tool(I.sort, "Sort")}${sep}${this.tool(I.pilcrow, "Show marks")}
          </div>
          <div class="row">
            ${this.tool(I.left, "Align left")}${this.tool(I.center, "Center", true)}${this.tool(I.right, "Align right")}
            ${this.tool(I.justify, "Justify")}${this.tool(I.distribute, "Distribute")}${sep}
            ${this.split(I.spacing, "Line spacing")}${sep}${this.split(I.bucket, "Shading")}${this.split(I.borders, "Borders")}
          </div>
        </div>
        ${this.foot("Paragraph")}
      </div>
      <div class="vline"></div>
      <div class="group">
        <div class="body">
          <div class="gallery">
            <div class="styles">
              ${STYLES.map((s, i) => html`<button class=${classMap({ card: true, sel: i === this.style_ })}
                  @click=${() => (this.style_ = i)}><span class="sample ${s.kind}">${s.sample}</span>${s.name}</button>`)}
            </div>
            <div class="scroll">
              <button class="dim" aria-label="Previous styles">${I.upCaret}</button>
              <button aria-label="Next styles">${caret()}</button>
              <button aria-label="More styles">${I.more}</button>
            </div>
          </div>
        </div>
        ${this.foot("Styles")}
      </div>
      <div class="vline"></div>
      <div class="group">
        <div class="body edit">
          <button class="line find"><span class="box">${I.find}</span>Find<span class="caret">${caret()}</span></button>
          <button class="line"><span class="box">${I.replace}</span>Replace</button>
          <button class="line"><span class="box">${I.select}</span>Select<span class="caret">${caret()}</span></button>
        </div>
        ${this.foot("Editing", false)}
      </div>
      <div class="vline"></div>
      <button class="collapse" aria-label="Collapse ribbon">${I.up}</button>
    </section>`;
  }

  private renderDocument() {
    return html`<main class="desk">
      <article class="page">
        <div class="content">
          <div class="blanks"><span class="blank"></span><span class="blank"></span></div>
          <h2>Draw a production possibility curve below for any two goods: 6 - A</h2>
          <div class="question">On your diagram above, illustrate the following:</div>
          <ol class="points">
            <li class="double"><span>a.</span><span>a point where all the economy’s resources are being fully utilised, given currently available technology</span></li>
            <li><span>b.</span><span>a point where they are not being fully utilised</span></li>
            <li><span>c.</span><span>an increase in the productive potential of the economy</span></li>
          </ol>
          <h2>What is the difference between positive and normative economics? <span class="wavy">4  -</span> T/C</h2>
        </div>
        <div class="marks"><span class="mark"></span><span class="mark"></span></div>
      </article>
      <div class="page next"></div>
    </main>`;
  }

  private renderStatus() {
    return html`<footer class="status">
      <button>Page 1 of 2</button><button>163 words</button>
      <button aria-label="Proofing">${I.proof}</button><button>English (Canada)</button>
      <div class="tail">
        <button class="disp">${I.display}Display Settings</button>
        <button class="view" aria-label="Read mode">${I.read}</button>
        <button class="view pressed" aria-label="Print layout">${I.print}</button>
        <button class="view web" aria-label="Web layout">${I.web}</button>
        <button aria-label="Zoom out">${I.minus}</button>
        <input class="zoom" type="range" min="10" max="210" value="113" aria-label="Zoom" />
        <button aria-label="Zoom in">${I.plus}</button>
        <button class="pct">110%</button>
      </div>
    </footer>`;
  }

  private renderTaskbar() {
    return html`<section class="taskbar">
      <button class="start" aria-label="Start">${I.windows}</button>
      <label class="search">${I.search}<input aria-label="Search" placeholder="Type here to search" /></label>
      ${APPS.map((a) => html`<button class=${classMap({ app: true, open: !!a.open, active: !!a.active })} aria-label=${a.label}>
        ${I[a.id]}${a.badge ? html`<span class="badge">${a.badge}</span>` : ""}</button>`)}
      <div class="tray">
        ${TRAY.map((t) => html`<button class="cell" aria-label=${t}>${I[t]}</button>`)}
        <button class="ime">中</button>
        <button class="pin"><span>拼</span></button>
        <button class="clock"><span>2:03 PM</span><span>2020-11-12</span></button>
        <button class="note" aria-label="Notifications">${I.notify}</button>
        <span class="peek"></span>
      </div>
    </section>`;
  }

  render() {
    return html`${this.renderHeader()}${this.renderRibbon()}${this.renderDocument()}${this.renderStatus()}${this.renderTaskbar()}
      <section class="under-area">
        <div class="panel">
          <div class="phead"><span class="bar"></span><button aria-label="Close panel">${I.bigClose}</button></div>
          <div class="pfoot"></div>
        </div>
      </section>`;
  }
}
